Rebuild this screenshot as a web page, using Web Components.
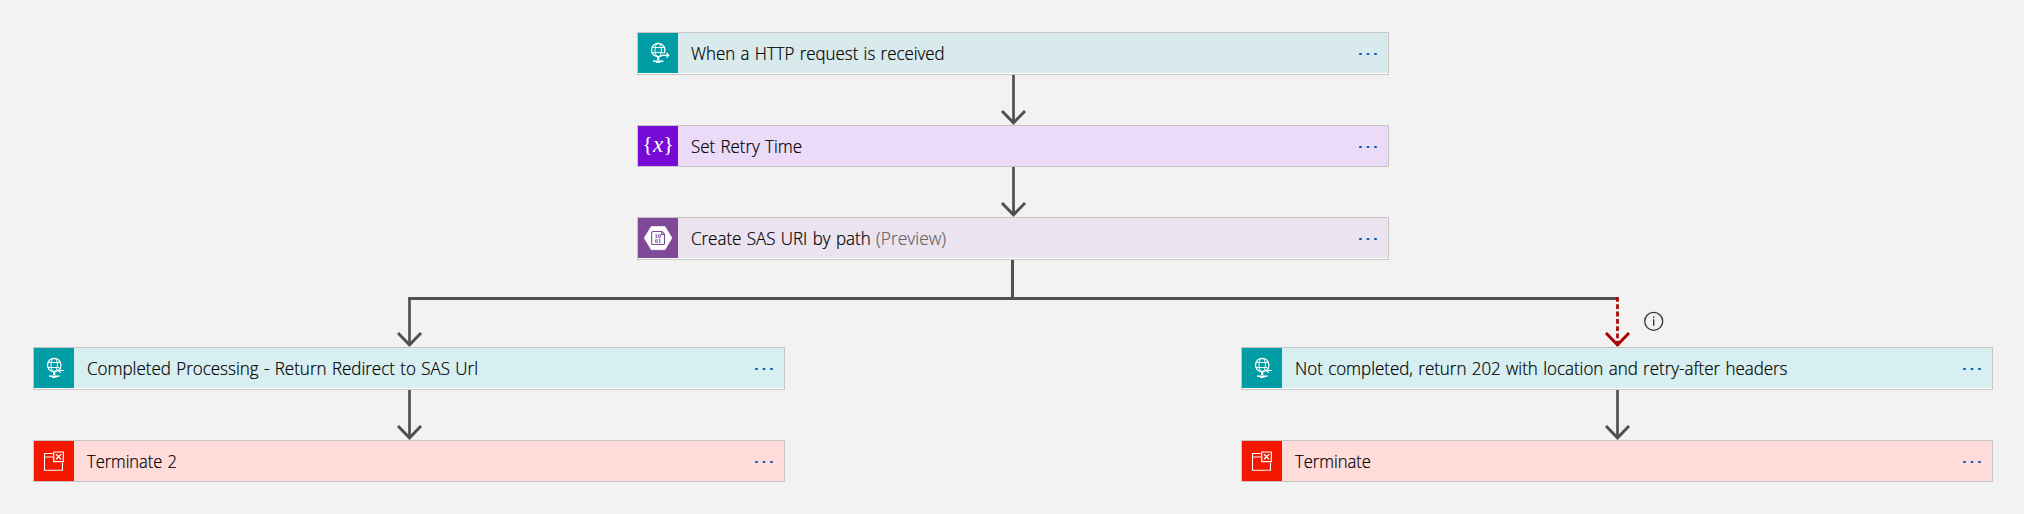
<!DOCTYPE html>
<html lang="en">
<head>
<meta charset="utf-8">
<title>Workflow designer</title>
<style>
html,body{margin:0;background:#f2f2f2}
body{font-family:"Open Sans","Noto Sans",sans-serif;color:#000}
</style>
</head>
<body>
<flow-designer></flow-designer>
<script>
const globe = `<g fill="none" stroke="#fff" stroke-width=".9"><circle cx="20.200" cy="17" r="6.700" stroke-width="1.300"/><ellipse cx="20.200" cy="17" rx="3.200" ry="6.700"/><path d="M14 14.500H26.400M14 19.500H25"/><path d="M20.200 24v3" stroke-width="2.200"/><path d="M15 28.200H25.400" stroke-width="1.500"/><path d="M18 29.500h4.400"/></g>`;
const ICONS = {
  request: globe+`<path d="M24.500 20.500h6v4h-6z" fill="#009da5"/><path d="M24.200 22.300h6.500M28.400 20l2.300 2.300-2.300 2.300" fill="none" stroke="#fff" stroke-width="1.200"/>`,
  response: globe+`<path d="M24.500 20.500h5v4h-5z" fill="#009da5"/><path d="M30 22.500h-5.500M26.900 20.200l-2.300 2.300 2.300 2.300" fill="none" stroke="#fff" stroke-width="1.200"/>`,
  variable: `<g fill="#fff" font-family="'Liberation Serif',serif" text-anchor="middle"><text x="9.600" y="25.400" font-size="22">{</text><text x="20.200" y="25.800" font-size="23" font-style="italic">x</text><text x="30.600" y="25.400" font-size="22">}</text></g>`,
  blob: `<path d="M13.200 8.500H27L34 20 27 31.700H13.200L6.200 20z" fill="#fff" stroke="#fff" stroke-width=".6" stroke-linejoin="round"/><path d="M15 13.500h9l2.500 2.700V25.500q0 1-1 1H15q-1.300 0-1.300-1V14.500q0-1 1.300-1zM23.700 13.500v3h3" fill="none" stroke="#804998" stroke-width="1.100"/><g fill="#804998" font-family="'Liberation Serif',serif" font-weight="700" font-size="6.600" text-anchor="middle"><text x="19.700" y="19.600">10</text><text x="20" y="25.300">01</text></g>`,
  terminate: `<g fill="none" stroke="#fff"><path d="M18.500 12.500H10.500V29.300H28.500V22" stroke-width="1.100"/><path d="M10.500 16H19" stroke-width="1.200" stroke-opacity=".8"/><path d="M19.700 11h9.600v9.600h-9.600z" stroke-width="1.200"/><path d="M22 13.200l5 5M27 13.200l-5 5" stroke-width="1.300"/></g>`
};
const THEME = {
  request:["#009da5","#d9eaec"], response:["#009da5","#d8eff1"],
  variable:["#770bd6","#ebdaf8"], blob:["#804998","#ebe3f0"], terminate:["#f41700","#ffdcda"]
};

class StepCard extends HTMLElement{
  connectedCallback(){
    const kind=this.getAttribute("kind"), [accent,tint]=THEME[kind];
    const root=this.attachShadow({mode:"open"});
    root.innerHTML=`<style>
      :host{display:flex;box-sizing:border-box;width:752px;height:43px;border:1px solid #c8c6c4;background:linear-gradient(${tint},${tint}) 0 0/100% 40px no-repeat #fff}
      :host([compact]){height:42px}
      .icon{flex:none;width:40px;height:40px;background:${accent}}
      svg{display:block}
      .title{flex:1;min-width:0;padding-left:13px;display:flex;font-size:17.600px;font-weight:350;-webkit-text-stroke:.22px currentColor;word-spacing:1px;line-height:41px;white-space:pre}
      ::slotted(fit-text){flex:none}
      .menu{flex:none;width:32px;height:40px}
    </style>
    <div class="icon"><svg width="40" height="40" viewBox="0 0 40 40">${ICONS[kind]}</svg></div>
    <div class="title"><slot></slot></div>
    <svg class="menu" width="32" height="40" fill="#0b5fbd"><path d="M3.200 20h2.600v2h-2.600zM10.700 20h2.600v2h-2.600zM18.200 20h2.600v2h-2.600z"/></svg>`;
  }
}

/* A label condensed horizontally to the advance width it is given. */
class FitText extends HTMLElement{
  connectedCallback(){
    const root=this.attachShadow({mode:"open"});
    root.innerHTML=`<style>:host{display:block;white-space:pre}span{display:inline-block;transform-origin:0 50%}</style><span><slot></slot></span>`;
    const span=root.querySelector("span"), width=+this.getAttribute("width");
    span.style.transform=`scaleX(${width/span.getBoundingClientRect().width})`;
    this.style.width=width+"px";
  }
}

class FlowArrow extends HTMLElement{
  connectedCallback(){
    this.attachShadow({mode:"open"}).innerHTML=`<style>:host{display:block;width:752px;height:50px}svg{display:block}</style>
    <svg width="752" height="50" fill="none" stroke="#505050"><path d="M376.500 0V48" stroke-width="2.700"/><path d="M365 36l11.500 11.800L388 36" stroke-width="2.900"/></svg>`;
  }
}

class BranchConnector extends HTMLElement{
  connectedCallback(){
    this.attachShadow({mode:"open"}).innerHTML=`<style>:host{display:block;height:87px}svg{display:block}</style>
    <svg width="2024" height="87" fill="none" stroke="#505050">
      <path d="M1012.500 0V38" stroke-width="3"/><path d="M408.200 38.500H1617" stroke-width="3"/>
      <path d="M409.500 38V85" stroke-width="2.700"/><path d="M398 73l11.500 11.800L421 73" stroke-width="2.900"/>
      <g stroke="#a80000"><path d="M1617.500 37V85" stroke-width="2.700" stroke-dasharray="4.800 2.500"/><path d="M1606 73l11.500 11.800L1629 73" stroke-width="2.900"/></g>
      <circle cx="1653.700" cy="61.300" r="9" stroke="#333" stroke-width="1.300"/>
      <path d="M1653.700 59.300v6.500M1653.700 56.300v1.500" stroke="#333" stroke-width="1.300"/>
    </svg>`;
  }
}

class FlowDesigner extends HTMLElement{
  connectedCallback(){
    this.attachShadow({mode:"open"}).innerHTML=`<style>
      :host{display:block;width:2024px;height:514px;box-sizing:border-box;padding-top:32px;overflow:hidden}
      .main{display:flex;flex-direction:column;margin-left:637px;width:752px}
      .branches{display:flex;gap:456px;padding-left:33px}
      .muted{color:#666}
    </style>
    <div class="main">
      <step-card kind="request"><fit-text width="253.500">When a HTTP request is received</fit-text></step-card>
      <flow-arrow></flow-arrow>
      <step-card kind="variable" compact><fit-text width="111">Set Retry Time</fit-text></step-card>
      <flow-arrow></flow-arrow>
      <step-card kind="blob"><fit-text width="185">Create SAS URI by path </fit-text><fit-text class="muted" width="70">(Preview)</fit-text></step-card>
    </div>
    <branch-connector></branch-connector>
    <div class="branches">
      <div>
        <step-card kind="response"><fit-text width="391">Completed Processing - Return Redirect to SAS Url</fit-text></step-card>
        <flow-arrow></flow-arrow>
        <step-card kind="terminate" compact><fit-text width="90">Terminate 2</fit-text></step-card>
      </div>
      <div>
        <step-card kind="response"><fit-text width="492.500">Not completed, return 202 with location and retry-after headers</fit-text></step-card>
        <flow-arrow></flow-arrow>
        <step-card kind="terminate" compact><fit-text width="76">Terminate</fit-text></step-card>
      </div>
    </div>`;
  }
}
customElements.define("step-card",StepCard);
customElements.define("flow-arrow",FlowArrow);
customElements.define("branch-connector",BranchConnector);
customElements.define("flow-designer",FlowDesigner);
customElements.define("fit-text",FitText);
</script>
</body>
</html>
